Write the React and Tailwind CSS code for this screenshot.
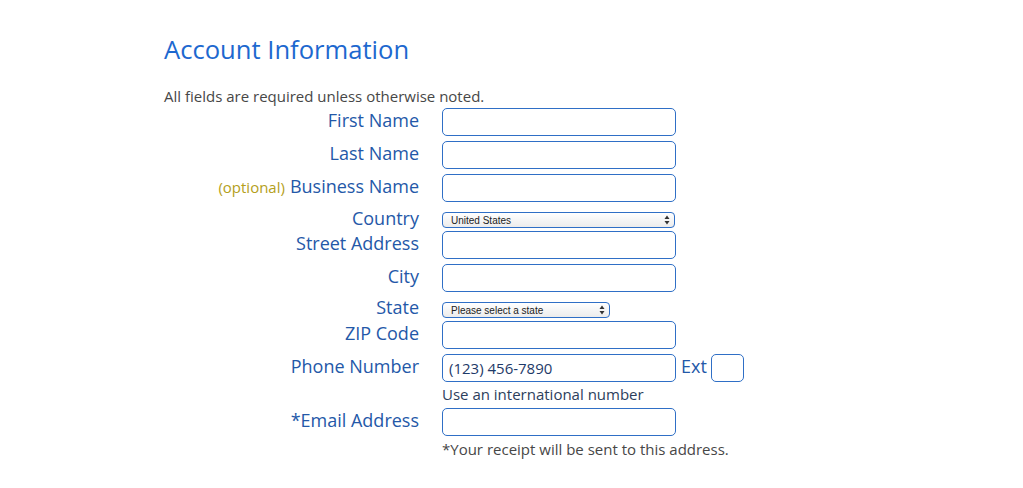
import React from 'react';

const font = { fontFamily: '"Open Sans", "Liberation Sans", sans-serif' };

function Arrows() {
  return (
    <svg width="6" height="10" viewBox="0 0 6 10" className="absolute right-[4px] top-1/2 -translate-y-1/2">
      <path d="M3 0.5 L5.5 4 L0.5 4 Z" fill="#333" />
      <path d="M3 9.5 L5.5 6 L0.5 6 Z" fill="#333" />
    </svg>
  );
}

function Select({ value, width }) {
  return (
    <div className={`relative h-[16px] ${width} rounded-[4px] border border-[#2f6fc6] bg-gradient-to-b from-[#ffffff] to-[#ececec]`}>
      <span className="absolute left-[8px] top-[1px] text-[10px] leading-[13px] text-[#222]" style={{ fontFamily: '"Liberation Sans", Arial, sans-serif' }}>{value}</span>
      <Arrows />
    </div>
  );
}

function Input({ value, className = 'w-[234px]' }) {
  return (
    <div className={`h-[28px] ${className} rounded-[5px] border border-[#2f6fc6] bg-white flex items-center px-[6px] text-[15px] text-[#1e3a68]`}>
      {value}
    </div>
  );
}

function Label({ children }) {
  return (
    <div className="w-[255px] shrink-0 text-right text-[18px] leading-[24px] text-[#2458a8]">{children}</div>
  );
}

export default function App() {
  return (
    <div className="min-h-screen w-full bg-white" style={font}>
      <div className="pl-[164px] pt-[32px]">
        <h1 className="text-[25.6px] leading-[36px] text-[#1d68cf] font-normal">Account Information</h1>
        <p className="mt-[18px] text-[15px] leading-[20px] text-[#474747]">All fields are required unless otherwise noted.</p>

        <div className="flex items-start gap-[23px] mt-[2px]">
          <Label>First Name</Label>
          <Input />
        </div>
        <div className="flex items-start gap-[23px] mt-[5px]">
          <Label>Last Name</Label>
          <Input />
        </div>
        <div className="flex items-start gap-[23px] mt-[5px]">
          <Label><span className="text-[15px] text-[#b4a01a] mr-[5px]">(optional)</span>Business Name</Label>
          <Input />
        </div>
        <div className="flex items-start gap-[23px] mt-[4px]">
          <Label>Country</Label>
          <div className="mt-[6px]"><Select value="United States" width="w-[233px]" /></div>
        </div>
        <div className="flex items-start gap-[23px] mt-[1px]">
          <Label>Street Address</Label>
          <Input />
        </div>
        <div className="flex items-start gap-[23px] mt-[5px]">
          <Label>City</Label>
          <Input />
        </div>
        <div className="flex items-start gap-[23px] mt-[3px]">
          <Label>State</Label>
          <div className="mt-[7px]"><Select value="Please select a state" width="w-[168px]" /></div>
        </div>
        <div className="flex items-start gap-[23px] mt-[2px]">
          <Label>ZIP Code</Label>
          <Input />
        </div>
        <div className="flex items-start gap-[23px] mt-[5px]">
          <Label>Phone Number</Label>
          <div>
            <div className="flex items-start">
              <Input value="(123) 456-7890" />
              <span className="ml-[5px] text-[18px] leading-[24px] text-[#2458a8]">Ext</span>
              <Input className="w-[33px] ml-[4px]" />
            </div>
            <div className="mt-[2px] text-[15px] leading-[20px] text-[#2d3e5c]">Use an international number</div>
          </div>
        </div>
        <div className="flex items-start gap-[23px] mt-[4px]">
          <Label>*Email Address</Label>
          <div>
            <Input />
            <div className="mt-[3px] text-[15px] leading-[20px] text-[#474747]">*Your receipt will be sent to this address.</div>
          </div>
        </div>
      </div>
    </div>
  );
}
